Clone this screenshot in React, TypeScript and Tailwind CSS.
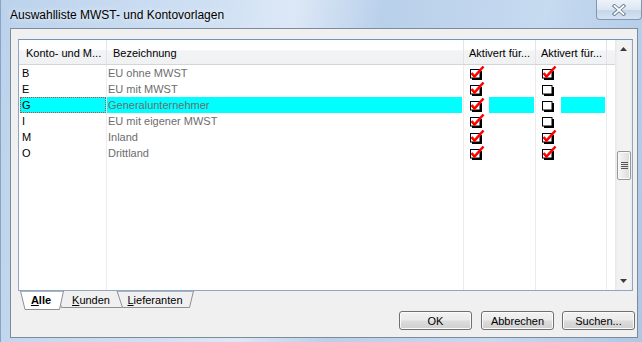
const rows = [
  { code: "B", name: "EU ohne MWST", a: true, b: true, sel: false },
  { code: "E", name: "EU mit MWST", a: true, b: false, sel: false },
  { code: "G", name: "Generalunternehmer", a: true, b: false, sel: true },
  { code: "I", name: "EU mit eigener MWST", a: true, b: false, sel: false },
  { code: "M", name: "Inland", a: true, b: true, sel: false },
  { code: "O", name: "Drittland", a: true, b: true, sel: false },
];

function CheckIcon({ checked }: { checked: boolean }) {
  return (
    <svg width="16" height="16" viewBox="0 0 16 16" className="block">
      <rect x="11" y="6" width="2" height="9" fill="#000" />
      <rect x="3" y="13" width="10" height="2" fill="#000" />
      <rect x="1.5" y="4.5" width="9.5" height="8.5" fill="#fff" stroke="#000" />
      {checked && (
        <polyline points="2.5,8 5.5,11.5 14.5,1.5" fill="none" stroke="#ff0000" strokeWidth="2.6" />
      )}
    </svg>
  );
}

function CheckCell({ checked, sel, w }: { checked: boolean; sel: boolean; w: string }) {
  return (
    <div className={`${w} flex border-r border-[#ececec]`}>
      <div className="w-[25px] pl-[5px] bg-white">
        <CheckIcon checked={checked} />
      </div>
      <div className={sel ? "flex-1 mr-[1px] bg-[#00ffff]" : "flex-1"} />
    </div>
  );
}

function Button({ label, className }: { label: string; className?: string }) {
  return (
    <div
      className={`w-[73px] h-[19px] rounded-[3px] border border-[#707070] shadow-[inset_0_0_0_1px_#fbfbfb] bg-[linear-gradient(#f2f2f2_0%,#ebebeb_48%,#dddddd_52%,#cfcfcf_100%)] flex items-center justify-center text-[11px] leading-[14px] text-black ${className ?? ""}`}
    >
      {label}
    </div>
  );
}

export default function App() {
  return (
    <div className="w-[642px] h-[342px] overflow-hidden flex flex-col border-l border-[#8aa3c0] bg-[linear-gradient(100deg,#bcd2ec_0%,#cfe0f3_30%,#dce8f6_42%,#b9d0ea_55%,#c6daf0_78%,#adc7e5_100%)] font-['Liberation_Sans',Arial,sans-serif]">
      {/* title bar */}
      <div className="h-[28px] flex items-start justify-between">
        <div className="pl-[9px] pt-[7px] text-[12px] leading-[16px] text-black [text-shadow:0_0_6px_#ffffff]">
          Auswahlliste MWST- und Kontovorlagen
        </div>
        <div className="w-[46px] h-[20px] rounded-b-[4px] border border-t-0 border-[#8197b1] bg-[linear-gradient(#eef3fa_0%,#dbe6f2_50%,#c6d7ea_55%,#d5e3f2_100%)] flex items-center justify-center">
          <svg width="14" height="12" viewBox="0 0 14 12">
            <path d="M2.5 2 L11.5 10 M11.5 2 L2.5 10" stroke="#6a7c92" strokeWidth="3.6" strokeLinecap="square" />
            <path d="M2.5 2 L11.5 10 M11.5 2 L2.5 10" stroke="#ffffff" strokeWidth="1.8" strokeLinecap="square" />
          </svg>
        </div>
      </div>

      {/* client area */}
      <div className="ml-[9px] mr-[4px] h-[310px] border border-[#7d8a99] bg-[#f0f0f0] flex flex-col pl-[7px] pr-[4px] pt-[10px]">
        {/* list */}
        <div className="w-[615px] h-[252px] border border-[#8ea6c2] border-t-[#6f95bf] bg-white flex text-[11px] leading-[16px]">
          <div className="w-[596px] flex flex-col">
            {/* header */}
            <div className="h-[25px] flex border-b border-[#d5d5d5] bg-[linear-gradient(#ffffff_0%,#ffffff_40%,#f2f3f5_45%,#f0f1f3_100%)] items-stretch text-black">
              <div className="w-[88px] border-r border-[#e2e4e8] pl-[7px] pt-[5px]">Konto- und M...</div>
              <div className="w-[357px] border-r border-[#e2e4e8] pl-[6px] pt-[5px]">Bezeichnung</div>
              <div className="w-[72px] border-r border-[#e2e4e8] pl-[5px] pt-[5px]">Aktivert für...</div>
              <div className="w-[71px] border-r border-[#e2e4e8] pl-[5px] pt-[5px]">Aktivert für...</div>
              <div className="flex-1" />
            </div>

            {/* rows */}
            {rows.map((r) => (
              <div key={r.code} className="h-[16px] flex">
                <div className="w-[88px] border-r border-[#ececec] pl-[1px]">
                  <div
                    className={
                      r.sel
                        ? "h-[16px] border border-dotted border-[#d0403c] bg-[#00ffff] pl-[1px] leading-[14px] text-black"
                        : "h-[16px] border border-transparent pl-[1px] leading-[14px] text-black"
                    }
                  >
                    {r.code}
                  </div>
                </div>
                <div className="w-[357px] border-r border-[#ececec]">
                  <div className={r.sel ? "h-[16px] mr-[1px] bg-[#00ffff] pl-[1px] text-[#6d6d6d]" : "h-[16px] pl-[1px] text-[#6d6d6d]"}>
                    {r.name}
                  </div>
                </div>
                <CheckCell checked={r.a} sel={r.sel} w="w-[72px]" />
                <CheckCell checked={r.b} sel={r.sel} w="w-[71px]" />
                <div className="flex-1" />
              </div>
            ))}

            {/* empty area with column lines */}
            <div className="flex-1 flex">
              <div className="w-[88px] border-r border-[#ececec]" />
              <div className="w-[357px] border-r border-[#ececec]" />
              <div className="w-[72px] border-r border-[#ececec]" />
              <div className="w-[71px] border-r border-[#ececec]" />
              <div className="flex-1" />
            </div>
          </div>

          {/* scrollbar */}
          <div className="w-[17px] flex flex-col bg-[linear-gradient(90deg,#e6e6e6_0%,#f1f1f1_15%,#f3f3f3_85%,#ebebeb_100%)]">
            <div className="h-[17px] flex items-center justify-center pt-[1px]">
              <svg width="7" height="4" viewBox="0 0 7 4">
                <polygon points="3.5,0 7,4 0,4" fill="#3c3c3c" />
              </svg>
            </div>
            <div className="flex-1">
              <div className="mt-[94px] ml-[2px] w-[14px] h-[29px] rounded-[2px] border border-[#979797] bg-[linear-gradient(90deg,#f5f5f5_0%,#e9e9e9_50%,#dcdcdc_100%)] shadow-[inset_0_0_0_1px_#fafafa] flex flex-col items-center justify-center gap-[1px]">
                <div className="w-[7px] h-[1px] bg-[#555555]" />
                <div className="w-[7px] h-[1px] bg-[#555555]" />
                <div className="w-[7px] h-[1px] bg-[#555555]" />
                <div className="w-[7px] h-[1px] bg-[#555555]" />
              </div>
            </div>
            <div className="h-[17px] flex items-center justify-center pb-[1px]">
              <svg width="7" height="4" viewBox="0 0 7 4">
                <polygon points="0,0 7,0 3.5,4" fill="#3c3c3c" />
              </svg>
            </div>
          </div>
        </div>

        {/* tab strip */}
        <div className="relative h-[20px] w-[200px] text-[11px] leading-[16px] text-black">
          <svg width="200" height="20" viewBox="0 0 200 20" className="absolute left-0 top-0">
            <polygon points="38,0 112,0 112,16.5 43,16.5" fill="#f0f0f0" />
            <polyline points="38,0 43.5,16.5 112,16.5" fill="none" stroke="#8c9097" />
            <polygon points="99,0 175.5,0 171.5,16.5 104.5,16.5" fill="#f0f0f0" stroke="#8c9097" />
            <line x1="99" y1="0" x2="175.5" y2="0" stroke="#8ea6c2" />
            <polygon points="2.5,0 45.5,0 41.5,18.5 7,18.5" fill="#ffffff" stroke="#8c9097" />
            <line x1="3" y1="0" x2="45" y2="0" stroke="#8ea6c2" />
          </svg>
          <div className="relative flex pl-[2px] pt-[1px]">
            <div className="w-[42px] text-center font-bold">
              <span className="underline underline-offset-[1px]">A</span>lle
            </div>
            <div className="w-[58px] text-center">
              <span className="underline underline-offset-[1px]">K</span>unden
            </div>
            <div className="w-[70px] text-center">
              <span className="underline underline-offset-[1px]">L</span>ieferanten
            </div>
          </div>
        </div>

        {/* buttons */}
        <div className="flex justify-end -mr-[2px]">
          <Button label="OK" />
          <Button label="Abbrechen" className="ml-[9px]" />
          <Button label="Suchen..." className="ml-[8px]" />
        </div>
      </div>
    </div>
  );
}
